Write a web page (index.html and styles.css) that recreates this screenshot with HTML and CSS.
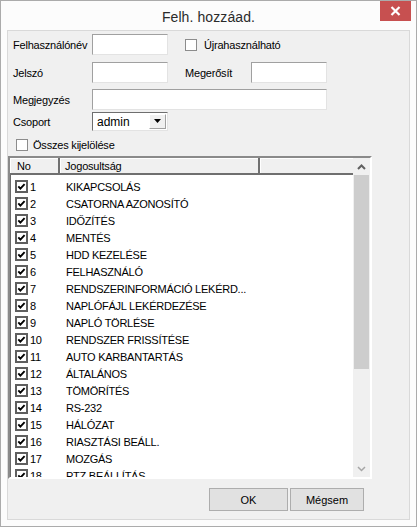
FILE: index.html
```html
<!DOCTYPE html>
<html>
<head>
<meta charset="utf-8">
<link rel="stylesheet" href="styles.css">
</head>
<body>
<div class="window">
  <div class="titlebar">
    <div class="title">Felh. hozzáad.</div>
    <div class="close"><svg width="11" height="10" viewBox="0 0 11 10"><path d="M1.5 1 L9.5 9 M9.5 1 L1.5 9" stroke="#fff" stroke-width="2.2"/></svg></div>
  </div>
  <div class="panel">
    <div class="form">
      <div class="lbl">Felhasználónév</div>
      <div class="field"><div class="input"></div></div>
      <div></div>
      <div class="lbl span2"><span class="cb"></span><span class="cbtext">Újrahasználható</span></div>

      <div class="lbl">Jelszó</div>
      <div class="field"><div class="input"></div></div>
      <div></div>
      <div class="lbl">Megerősít</div>
      <div class="field"><div class="input"></div></div>

      <div class="lbl">Megjegyzés</div>
      <div class="field span4"><div class="input"></div></div>

      <div class="lbl short">Csoport</div>
      <div class="field"><div class="select"><span class="selval">admin</span><span class="selbtn"><svg width="8" height="5" viewBox="0 0 8 5"><path d="M0 0 H7 L3.5 4 Z" fill="#000"/></svg></span></div></div>

      <div class="lbl all span5"><span class="cb"></span><span class="cbtext">Összes kijelölése</span></div>
    </div>

    <div class="list">
      <div class="main">
        <div class="header">
          <div class="hcell c1">No</div>
          <div class="hcell c2">Jogosultság</div>
          <div class="hcell c3"></div>
        </div>
        <div class="rows">
          <div class="row"><span class="chk"><svg width="13" height="13" viewBox="0 0 13 13"><rect x="1" y="1" width="11" height="11" fill="#fff" stroke="#5f5f5f" stroke-width="2"/><path d="M3.3 6.3 L5.4 8.6 L9.6 4.2" fill="none" stroke="#000" stroke-width="1.9"/></svg></span><span class="num">1</span><span class="name">KIKAPCSOLÁS</span></div>
          <div class="row"><span class="chk"><svg width="13" height="13" viewBox="0 0 13 13"><rect x="1" y="1" width="11" height="11" fill="#fff" stroke="#5f5f5f" stroke-width="2"/><path d="M3.3 6.3 L5.4 8.6 L9.6 4.2" fill="none" stroke="#000" stroke-width="1.9"/></svg></span><span class="num">2</span><span class="name">CSATORNA AZONOSÍTÓ</span></div>
          <div class="row"><span class="chk"><svg width="13" height="13" viewBox="0 0 13 13"><rect x="1" y="1" width="11" height="11" fill="#fff" stroke="#5f5f5f" stroke-width="2"/><path d="M3.3 6.3 L5.4 8.6 L9.6 4.2" fill="none" stroke="#000" stroke-width="1.9"/></svg></span><span class="num">3</span><span class="name">IDŐZÍTÉS</span></div>
          <div class="row"><span class="chk"><svg width="13" height="13" viewBox="0 0 13 13"><rect x="1" y="1" width="11" height="11" fill="#fff" stroke="#5f5f5f" stroke-width="2"/><path d="M3.3 6.3 L5.4 8.6 L9.6 4.2" fill="none" stroke="#000" stroke-width="1.9"/></svg></span><span class="num">4</span><span class="name">MENTÉS</span></div>
          <div class="row"><span class="chk"><svg width="13" height="13" viewBox="0 0 13 13"><rect x="1" y="1" width="11" height="11" fill="#fff" stroke="#5f5f5f" stroke-width="2"/><path d="M3.3 6.3 L5.4 8.6 L9.6 4.2" fill="none" stroke="#000" stroke-width="1.9"/></svg></span><span class="num">5</span><span class="name">HDD KEZELÉSE</span></div>
          <div class="row"><span class="chk"><svg width="13" height="13" viewBox="0 0 13 13"><rect x="1" y="1" width="11" height="11" fill="#fff" stroke="#5f5f5f" stroke-width="2"/><path d="M3.3 6.3 L5.4 8.6 L9.6 4.2" fill="none" stroke="#000" stroke-width="1.9"/></svg></span><span class="num">6</span><span class="name">FELHASZNÁLÓ</span></div>
          <div class="row"><span class="chk"><svg width="13" height="13" viewBox="0 0 13 13"><rect x="1" y="1" width="11" height="11" fill="#fff" stroke="#5f5f5f" stroke-width="2"/><path d="M3.3 6.3 L5.4 8.6 L9.6 4.2" fill="none" stroke="#000" stroke-width="1.9"/></svg></span><span class="num">7</span><span class="name">RENDSZERINFORMÁCIÓ LEKÉRD...</span></div>
          <div class="row"><span class="chk"><svg width="13" height="13" viewBox="0 0 13 13"><rect x="1" y="1" width="11" height="11" fill="#fff" stroke="#5f5f5f" stroke-width="2"/><path d="M3.3 6.3 L5.4 8.6 L9.6 4.2" fill="none" stroke="#000" stroke-width="1.9"/></svg></span><span class="num">8</span><span class="name">NAPLÓFÁJL LEKÉRDEZÉSE</span></div>
          <div class="row"><span class="chk"><svg width="13" height="13" viewBox="0 0 13 13"><rect x="1" y="1" width="11" height="11" fill="#fff" stroke="#5f5f5f" stroke-width="2"/><path d="M3.3 6.3 L5.4 8.6 L9.6 4.2" fill="none" stroke="#000" stroke-width="1.9"/></svg></span><span class="num">9</span><span class="name">NAPLÓ TÖRLÉSE</span></div>
          <div class="row"><span class="chk"><svg width="13" height="13" viewBox="0 0 13 13"><rect x="1" y="1" width="11" height="11" fill="#fff" stroke="#5f5f5f" stroke-width="2"/><path d="M3.3 6.3 L5.4 8.6 L9.6 4.2" fill="none" stroke="#000" stroke-width="1.9"/></svg></span><span class="num">10</span><span class="name">RENDSZER FRISSÍTÉSE</span></div>
          <div class="row"><span class="chk"><svg width="13" height="13" viewBox="0 0 13 13"><rect x="1" y="1" width="11" height="11" fill="#fff" stroke="#5f5f5f" stroke-width="2"/><path d="M3.3 6.3 L5.4 8.6 L9.6 4.2" fill="none" stroke="#000" stroke-width="1.9"/></svg></span><span class="num">11</span><span class="name">AUTO KARBANTARTÁS</span></div>
          <div class="row"><span class="chk"><svg width="13" height="13" viewBox="0 0 13 13"><rect x="1" y="1" width="11" height="11" fill="#fff" stroke="#5f5f5f" stroke-width="2"/><path d="M3.3 6.3 L5.4 8.6 L9.6 4.2" fill="none" stroke="#000" stroke-width="1.9"/></svg></span><span class="num">12</span><span class="name">ÁLTALÁNOS</span></div>
          <div class="row"><span class="chk"><svg width="13" height="13" viewBox="0 0 13 13"><rect x="1" y="1" width="11" height="11" fill="#fff" stroke="#5f5f5f" stroke-width="2"/><path d="M3.3 6.3 L5.4 8.6 L9.6 4.2" fill="none" stroke="#000" stroke-width="1.9"/></svg></span><span class="num">13</span><span class="name">TÖMÖRÍTÉS</span></div>
          <div class="row"><span class="chk"><svg width="13" height="13" viewBox="0 0 13 13"><rect x="1" y="1" width="11" height="11" fill="#fff" stroke="#5f5f5f" stroke-width="2"/><path d="M3.3 6.3 L5.4 8.6 L9.6 4.2" fill="none" stroke="#000" stroke-width="1.9"/></svg></span><span class="num">14</span><span class="name">RS-232</span></div>
          <div class="row"><span class="chk"><svg width="13" height="13" viewBox="0 0 13 13"><rect x="1" y="1" width="11" height="11" fill="#fff" stroke="#5f5f5f" stroke-width="2"/><path d="M3.3 6.3 L5.4 8.6 L9.6 4.2" fill="none" stroke="#000" stroke-width="1.9"/></svg></span><span class="num">15</span><span class="name">HÁLÓZAT</span></div>
          <div class="row"><span class="chk"><svg width="13" height="13" viewBox="0 0 13 13"><rect x="1" y="1" width="11" height="11" fill="#fff" stroke="#5f5f5f" stroke-width="2"/><path d="M3.3 6.3 L5.4 8.6 L9.6 4.2" fill="none" stroke="#000" stroke-width="1.9"/></svg></span><span class="num">16</span><span class="name">RIASZTÁSI BEÁLL.</span></div>
          <div class="row"><span class="chk"><svg width="13" height="13" viewBox="0 0 13 13"><rect x="1" y="1" width="11" height="11" fill="#fff" stroke="#5f5f5f" stroke-width="2"/><path d="M3.3 6.3 L5.4 8.6 L9.6 4.2" fill="none" stroke="#000" stroke-width="1.9"/></svg></span><span class="num">17</span><span class="name">MOZGÁS</span></div>
          <div class="row"><span class="chk"><svg width="13" height="13" viewBox="0 0 13 13"><rect x="1" y="1" width="11" height="11" fill="#fff" stroke="#5f5f5f" stroke-width="2"/><path d="M3.3 6.3 L5.4 8.6 L9.6 4.2" fill="none" stroke="#000" stroke-width="1.9"/></svg></span><span class="num">18</span><span class="name">PTZ BEÁLLÍTÁS</span></div>
        </div>
      </div>
      <div class="scrollbar">
        <div class="sbtn"><svg width="9" height="6" viewBox="0 0 9 6"><path d="M1 5 L4.5 1.5 L8 5" fill="none" stroke="#606060" stroke-width="2"/></svg></div>
        <div class="thumb"></div>
        <div class="track"></div>
        <div class="sbtn"><svg width="9" height="6" viewBox="0 0 9 6"><path d="M1 1 L4.5 4.5 L8 1" fill="none" stroke="#a6a6a6" stroke-width="1.5"/></svg></div>
      </div>
    </div>

    <div class="buttons">
      <div class="btn ok">OK</div>
      <div class="btn cancel">Mégsem</div>
    </div>
  </div>
</div>
</body>
</html>
```

FILE: styles.css
```css
* { box-sizing: border-box; }
body {
  margin: 0;
  background: #ffffff;
  font-family: "Liberation Sans", Arial, sans-serif;
  font-size: 11px;
  color: #000;
}
.window {
  width: 417px;
  height: 527px;
  border: 1px solid #ababab;
  background: #fcfcfc;
  display: flex;
  flex-direction: column;
}
.titlebar {
  height: 29px;
  display: grid;
  grid-template-columns: 1fr auto 1fr;
  align-items: start;
}
.title {
  grid-column: 2;
  font-size: 14px;
  color: #2b2b2b;
  padding-top: 8px;
  letter-spacing: 0.1px;
}
.close {
  grid-column: 3;
  justify-self: end;
  margin-right: 5px;
  width: 31px;
  height: 20px;
  background: #c75050;
  display: flex;
  align-items: center;
  justify-content: center;
}
.panel {
  flex: 1;
  margin: 0 6px 6px 6px;
  border: 1px solid #d9d9d9;
  background: #f0f0f0;
  display: flex;
  flex-direction: column;
}
.form {
  margin-top: 3px;
  padding-left: 5px;
  display: grid;
  grid-template-columns: 79px 76px 17px 66px 76px;
  grid-template-rows: 28px 27px 23px 25px 19px;
  letter-spacing: -0.2px;
}
.lbl {
  height: 21px;
  display: flex;
  align-items: center;
  white-space: nowrap;
}
.lbl.short { height: 19px; }
.span2 { grid-column: span 2; }
.span4 { grid-column: span 4; }
.span5 { grid-column: span 5; }
.lbl.all { height: 16px; padding-left: 3px; }
.field { height: 21px; }
.input {
  height: 21px;
  background: #fff;
  border: 1px solid;
  border-color: #a0a0a0 #e3e3e3 #e3e3e3 #a0a0a0;
}
.cb {
  width: 12px;
  height: 12px;
  background: #fff;
  border: 1px solid #8c8c8c;
  flex: none;
}
.cbtext { margin-left: 7px; }
.lbl.all .cbtext { margin-left: 5px; }
.select {
  height: 19px;
  background: #fff;
  border: 1px solid;
  border-color: #6e6e6e #e3e3e3 #e3e3e3 #6e6e6e;
  display: flex;
  align-items: center;
  justify-content: space-between;
  padding: 1px;
}
.selval { padding-left: 3px; font-size: 12px; letter-spacing: 0; }
.selbtn {
  width: 17px;
  height: 15px;
  background: #f0f0f0;
  border: 1px solid;
  border-color: #fff #a0a0a0 #a0a0a0 #fff;
  display: flex;
  align-items: center;
  justify-content: center;
}
.list {
  width: 364px;
  height: 323px;
  border: 2px solid;
  border-color: #8a8a8a #ffffff #ffffff #8a8a8a;
  box-shadow: inset 1px 1px 0 #6a6a6a;
  background: #fff;
  display: grid;
  grid-template-columns: 1fr 17px;
  overflow: hidden;
}
.main { overflow: hidden; }
.header {
  display: flex;
  height: 17px;
  background: #f0f0f0;
  border-bottom: 2px solid #6f6f6f;
}
.hcell {
  display: flex;
  align-items: center;
  border-right: 2px solid #707070;
  box-shadow: inset 1px 1px 0 #ffffff;
  letter-spacing: -0.2px;
}
.c1 { width: 50px; padding-left: 7px; }
.c2 { width: 200px; padding-left: 5px; }
.c3 { flex: 1; border-right: none; }
.rows { padding-top: 3px; }
.row {
  height: 17px;
  display: flex;
  align-items: center;
  padding-left: 5px;
  white-space: nowrap;
  letter-spacing: -0.25px;
}
.chk { width: 13px; height: 13px; display: flex; }
.num { width: 36px; margin-left: 2px; }
.scrollbar {
  display: flex;
  flex-direction: column;
  background: #f0f0f0;
}
.sbtn {
  height: 17px;
  display: flex;
  align-items: center;
  justify-content: center;
}
.thumb { height: 194px; background: #cdcdcd; margin: 0 1px; }
.track { flex: 1; }
.buttons {
  display: flex;
  justify-content: flex-end;
  gap: 2px;
  margin-top: 9px;
  padding-right: 45px;
}
.btn {
  height: 23px;
  background: #e1e1e1;
  border: 1px solid #adadad;
  display: flex;
  align-items: center;
  justify-content: center;
  font-size: 11px;
}
.ok { width: 79px; }
.cancel { width: 74px; }
```
